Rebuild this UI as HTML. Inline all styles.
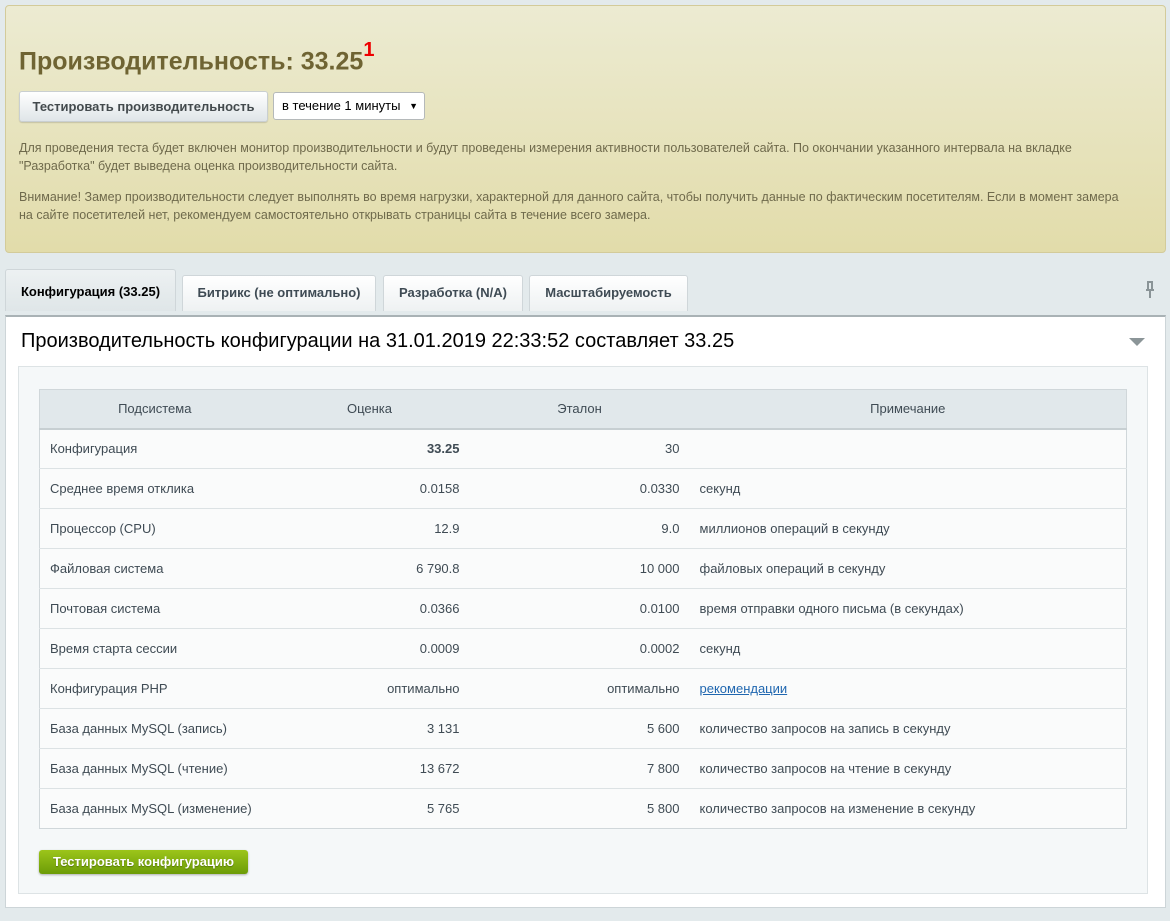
<!DOCTYPE html>
<html><head><meta charset="utf-8"><style>
*{box-sizing:border-box;margin:0;padding:0}
body{width:1170px;height:921px;background:#e3eaec;font-family:"Liberation Sans",Arial,sans-serif;color:#3f4b54;position:relative;overflow:hidden}
.top{position:absolute;left:5px;top:5px;width:1161px;height:248px;background:linear-gradient(#ecebd2,#e2dcaa);border:1px solid #d3cb9a;border-radius:4px}
h1{position:absolute;left:19px;top:43px;font-size:25px;color:#6f6433;font-weight:bold}
h1 sup{color:#e00;font-size:20px;position:relative;top:-4px}
.btn{position:absolute;left:19px;top:91px;width:249px;height:31px;background:linear-gradient(#fff,#dfe5e8);border:1px solid #c9cfd1;border-radius:3px;font-size:13px;font-weight:bold;color:#434a4d;line-height:29px;text-align:center;box-shadow:0 1px 1px rgba(0,0,0,.15)}
.sel{position:absolute;left:273px;top:92px;width:152px;height:28px;background:#fff;border:1px solid #b5b9ba;border-radius:3px;font-size:13px;color:#000;line-height:26px;padding-left:8px}
.sel:after{content:"▼";position:absolute;right:6px;top:0;font-size:9px}
.p{position:absolute;left:19px;font-size:12.5px;color:#6f6a4c;line-height:18px;width:1110px}
.tab{position:absolute;top:275px;height:36px;background:linear-gradient(#fff,#eef1f2);border:1px solid #cfd6d9;border-bottom:none;border-radius:3px 3px 0 0;font-size:13px;font-weight:bold;color:#3f4b54;line-height:33px;text-align:center}
.tab.a{top:269px;height:42px;background:linear-gradient(#edf1f2,#dfe6e8);line-height:43px;color:#000}
.panel{position:absolute;left:5px;top:315px;width:1161px;height:593px;background:#fff;border:1px solid #cdd5d8;border-top:2px solid #a9b2b5}
h2{position:absolute;left:21px;top:330px;font-size:20px;font-weight:normal;color:#000}
.tri{position:absolute;left:1129px;top:338px;width:0;height:0;border-left:8px solid transparent;border-right:8px solid transparent;border-top:8px solid #8b9598}
.inner{position:absolute;left:18px;top:366px;width:1130px;height:528px;background:#f5f8f9;border:1px solid #dde3e5}
table{position:absolute;left:39px;top:389px;width:1088px;border-collapse:collapse;font-size:13px;color:#3f4b54;background:#fafbfb;border:1px solid #d0d7da}
th{height:39px;background:#e1e8eb;font-weight:normal;color:#3f4b54;border-bottom:2px solid #c7cfd2;padding:0 10px}
td{height:40px;border-top:1px solid #dce2e4;padding:0 10px}
td.r{text-align:right;padding-right:10px}
a{color:#2067b0}
.gb{position:absolute;left:39px;top:850px;width:209px;height:24px;background:linear-gradient(#9cc51a,#6c9c07);border-radius:3px;color:#fff;font-weight:bold;font-size:13px;text-align:center;line-height:23px;box-shadow:0 1px 2px rgba(0,0,0,.3);text-shadow:0 1px 1px rgba(0,0,0,.3)}
</style></head><body>
<div class="top"></div>
<h1>Производительность: 33.25<sup>1</sup></h1>
<div class="btn">Тестировать производительность</div>
<div class="sel">в течение 1 минуты</div>
<div class="p" style="top:139px">Для проведения теста будет включен монитор производительности и будут проведены измерения активности пользователей сайта. По окончании указанного интервала на вкладке "Разработка" будет выведена оценка производительности сайта.</div>
<div class="p" style="top:188px">Внимание! Замер производительности следует выполнять во время нагрузки, характерной для данного сайта, чтобы получить данные по фактическим посетителям. Если в момент замера на сайте посетителей нет, рекомендуем самостоятельно открывать страницы сайта в течение всего замера.</div>
<div class="tab a" style="left:5px;width:171px">Конфигурация (33.25)</div>
<div class="tab" style="left:182px;width:194px">Битрикс (не оптимально)</div>
<div class="tab" style="left:383px;width:140px">Разработка (N/A)</div>
<div class="tab" style="left:529px;width:159px">Масштабируемость</div>
<svg style="position:absolute;left:1143px;top:281px" width="14" height="18" viewBox="0 0 14 18"><path d="M4 1h6M5 1v7M9 1v7M3 9h8M7 9v8" stroke="#8a9497" stroke-width="2" fill="none"/></svg>
<div class="panel"></div>
<h2>Производительность конфигурации на 31.01.2019 22:33:52 составляет 33.25</h2>
<div class="tri"></div>
<div class="inner"></div>
<table>
<tr><th style="width:230px">Подсистема</th><th style="width:200px">Оценка</th><th style="width:220px">Эталон</th><th>Примечание</th></tr>
<tr><td>Конфигурация</td><td class="r"><b>33.25</b></td><td class="r">30</td><td></td></tr>
<tr><td>Среднее время отклика</td><td class="r">0.0158</td><td class="r">0.0330</td><td>секунд</td></tr>
<tr><td>Процессор (CPU)</td><td class="r">12.9</td><td class="r">9.0</td><td>миллионов операций в секунду</td></tr>
<tr><td>Файловая система</td><td class="r">6 790.8</td><td class="r">10 000</td><td>файловых операций в секунду</td></tr>
<tr><td>Почтовая система</td><td class="r">0.0366</td><td class="r">0.0100</td><td>время отправки одного письма (в секундах)</td></tr>
<tr><td>Время старта сессии</td><td class="r">0.0009</td><td class="r">0.0002</td><td>секунд</td></tr>
<tr><td>Конфигурация PHP</td><td class="r">оптимально</td><td class="r">оптимально</td><td><a href="#">рекомендации</a></td></tr>
<tr><td>База данных MySQL (запись)</td><td class="r">3 131</td><td class="r">5 600</td><td>количество запросов на запись в секунду</td></tr>
<tr><td>База данных MySQL (чтение)</td><td class="r">13 672</td><td class="r">7 800</td><td>количество запросов на чтение в секунду</td></tr>
<tr><td>База данных MySQL (изменение)</td><td class="r">5 765</td><td class="r">5 800</td><td>количество запросов на изменение в секунду</td></tr>
</table>
<div class="gb">Тестировать конфигурацию</div>
</body></html>
